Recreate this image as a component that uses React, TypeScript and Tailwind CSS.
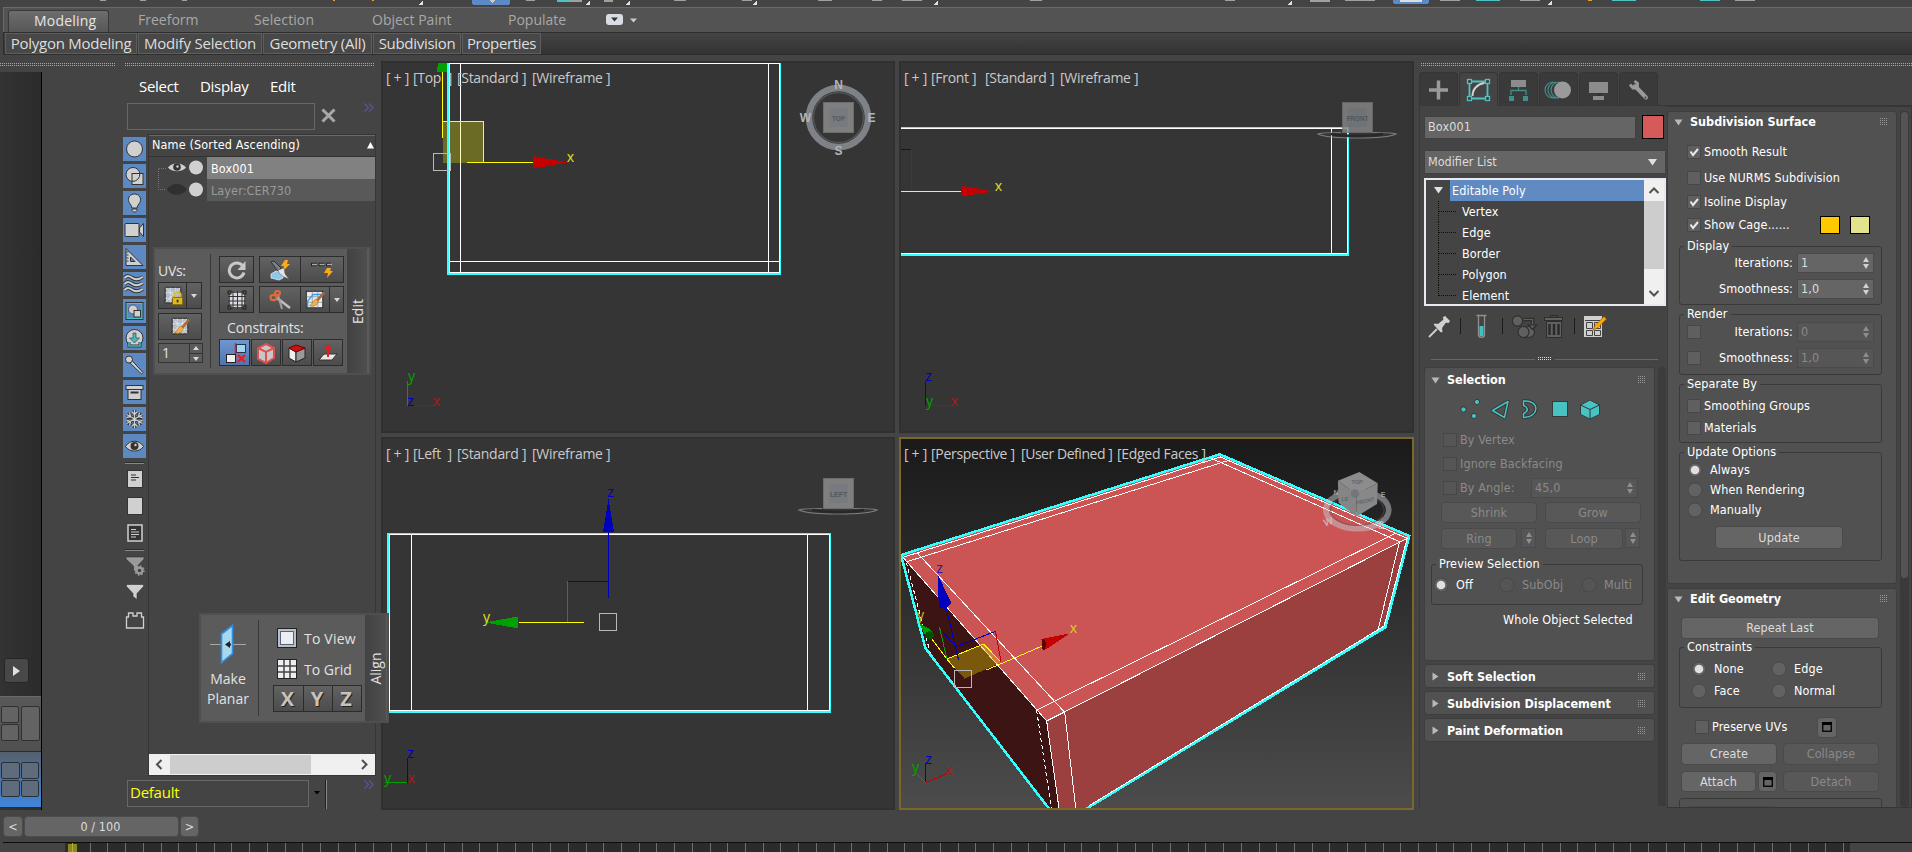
import React from "react";

const uiBase = "font-['DejaVu_Sans',sans-serif] font-stretch-condensed text-[12.5px] leading-4 whitespace-pre";
const ui = uiBase + " tracking-[0.1px]";
const seg = "font-['Open_Sans','Noto_Sans',sans-serif] whitespace-pre";

function Dots({ className = "" }: { className?: string }) {
  return (
    <div className={"flex flex-col gap-px " + className}>
      <div className="h-px bg-[repeating-linear-gradient(90deg,#a8a8a8_0_1px,#444_1px_2px)]" />
      <div className="h-px bg-[repeating-linear-gradient(90deg,#a8a8a8_0_1px,#444_1px_2px)]" />
    </div>
  );
}

/* ---------- top bars ---------- */

function TopToolbar() {
  return (
    <svg className="block h-[7px] w-full shrink-0" viewBox="0 0 1912 7" shapeRendering="crispEdges">
      <rect x="472" y="-4" width="38" height="9" rx="3" fill="#5c8ac6" />
      <rect x="1393" y="-4" width="36" height="8" rx="3" fill="#5c8ac6" />
      <rect x="1400" y="0" width="22" height="2" fill="#ddd" />
      <path d="M489 0h6l-3 3z" fill="#ccc" />
      <g fill="#e8a020"><rect x="333" y="0" width="2" height="1" /><rect x="372" y="0" width="2" height="1" /><rect x="1588" y="0" width="4" height="1" /></g>
      <g fill="#a0a0a0">
        <rect x="100" y="0" width="6" height="1" /><rect x="140" y="0" width="6" height="1" /><rect x="182" y="0" width="5" height="1" />
        <rect x="526" y="0" width="9" height="1" /><rect x="570" y="0" width="12" height="2" /><rect x="604" y="0" width="9" height="2" />
        <rect x="674" y="0" width="12" height="1" /><rect x="742" y="0" width="10" height="1" /><rect x="818" y="0" width="14" height="1" />
        <rect x="872" y="0" width="10" height="1" /><rect x="902" y="0" width="20" height="1" /><rect x="1030" y="0" width="12" height="1" />
        <rect x="1225" y="0" width="10" height="1" /><rect x="1310" y="0" width="20" height="2" /><rect x="1345" y="0" width="30" height="1" />
        <rect x="1440" y="0" width="20" height="1" /><rect x="1520" y="0" width="20" height="1" /><rect x="1735" y="0" width="20" height="1" />
      </g>
      <g fill="#4fc3c3"><rect x="557" y="0" width="13" height="2" /><rect x="1476" y="0" width="24" height="1" /><rect x="1612" y="0" width="24" height="1" /><rect x="1700" y="0" width="20" height="1" /></g>
      <g fill="#e0e0e0"><path d="M423 0v5h-5z" /><path d="M590 0v5h-5z" /><path d="M630 0v5h-5z" /><path d="M757 0v5h-5z" /><path d="M938 0v5h-5z" /><path d="M1552 0v5h-5z" /><path d="M1292 0v5h-5z" /></g>
    </svg>
  );
}

function Ribbon() {
  const cats: [string, string][] = [
    ["Polygon Modeling", "w-[132px] tracking-[-0.25px]"],
    ["Modify Selection", "w-[124px] tracking-[-0.2px]"],
    ["Geometry (All)", "w-[109px] tracking-[-0.25px]"],
    ["Subdivision", "w-[88px] tracking-[-0.3px]"],
    ["Properties", "w-[79px] tracking-[-0.35px]"],
  ];
  return (
    <div className={"flex flex-col shrink-0 h-[48px] pl-[3px] text-[14px] " + seg}>
      <div className="flex h-[25px] border-t border-l border-[#6a6a6a] bg-[#535353] pl-1 pt-[2px] text-[#a8a8a8] leading-[20px]">
        <div className="w-[101px] h-[23px] rounded-t-[3px] border border-b-0 border-[#3a3a3a] bg-gradient-to-b from-[#6d6d6d] to-[#565656] pl-[25px] leading-[19px] tracking-[0.2px] text-[#e6e6e6]">Modeling</div>
        <div className="pl-[29px] w-[116px]">Freeform</div>
        <div className="pl-[29px] w-[118px] tracking-[0.1px]">Selection</div>
        <div className="pl-[29px] w-[136px]">Object Paint</div>
        <div className="pl-[29px] w-[127px]">Populate</div>
        <div className="mt-1 h-[11px] w-[17px] rounded-[3px] bg-[#d8dce4] flex items-center justify-center">
          <svg width="7" height="5"><path d="M0 .5h7l-3.500 4z" fill="#333" /></svg>
        </div>
        <svg className="mt-[8px] ml-[7px]" width="7" height="5"><path d="M0 .5h7l-3.500 4z" fill="#ccc" /></svg>
      </div>
      <div className="flex h-[23px] gap-px border border-[#2e2e2e] border-r-0 bg-gradient-to-b from-[#444] to-[#333] pl-px">
        {cats.map(([t, w]) => (
          <div key={t} className={"flex h-[21px] justify-center border border-[#5e5e5e] bg-[#484848] text-[15px] leading-[19px] text-[#dedede] " + w}>{t}</div>
        ))}
      </div>
    </div>
  );
}

/* ---------- scene explorer ---------- */

const L = "#d0d0d0";
const D = "#333";
const explorerIcons: React.ReactNode[] = [
  <circle cx="12" cy="12" r="8" fill={L} stroke={D} />,
  <g stroke={D} fill={L}><circle cx="10.500" cy="10.500" r="7" /><rect x="9.500" y="9.500" width="11" height="11" /><path d="M9.500 17.300A7 7 0 0 0 17.300 9.500" fill="none" /></g>,
  <g stroke={D} fill={L}><path d="M12 3c-4 0-6.500 3-6 6.500.4 3 3 4 3.500 7.500h5c.5-3.500 3.100-4.500 3.500-7.500C18.500 6 16 3 12 3z" /><path d="M9.500 18h5v1.500l-1.500 1.500h-2l-1.500-1.500z" /></g>,
  <g stroke={D} fill={L}><rect x="2.500" y="5.500" width="14" height="13" rx="1" /><path d="M17 10l4-4.500v13L17 14z" /></g>,
  <g stroke={D} fill={L}><path d="M3.500 3.500v17h17zM8 12v4.500h4.500z" fillRule="evenodd" /><path d="M4 7h2M4 10h2M4 13h2M4 16h2" /></g>,
  <g fill="none"><path d="M2 6c3-3 5-2 8 0s6 2 10-1M2 12c3-3 5-2 8 0s6 2 10-1M2 18c3-3 5-2 8 0s6 2 10-1" stroke={D} strokeWidth="4" /><path d="M2 6c3-3 5-2 8 0s6 2 10-1M2 12c3-3 5-2 8 0s6 2 10-1M2 18c3-3 5-2 8 0s6 2 10-1" stroke={L} strokeWidth="2" /></g>,
  <g><rect x="3" y="3" width="18" height="18" fill={D} /><rect x="4.500" y="4.500" width="15" height="15" fill="#5c89c2" stroke="#4cc4c4" /><circle cx="10.500" cy="10.500" r="4.500" fill={L} stroke={D} strokeWidth=".7" /><rect x="11.500" y="11.500" width="6.500" height="6.500" fill={L} stroke={D} /></g>,
  <g><circle cx="12" cy="12" r="8.500" fill={L} stroke={D} /><path d="M10.500 7h3v5h3.500l-5 5-5-5h3.500z" fill="#45b8b8" stroke={D} strokeWidth=".6" /><path d="M6.500 16v4h11v-4" fill="none" stroke={D} strokeWidth="3" /><path d="M6.500 16v4h11v-4" fill="none" stroke="#45b8b8" strokeWidth="1.600" /></g>,
  <g stroke={D} fill={L}><path d="M8 6l12.500 13.500L19 21 6 8.500z" /><circle cx="6.500" cy="6.500" r="3.500" /></g>,
  <g stroke={D} fill={L}><rect x="5.500" y="8.500" width="13" height="11" /><rect x="3.500" y="5.500" width="17" height="4" /><path d="M8 12.500h8" strokeWidth="2" /></g>,
  <g fill="none"><path d="M12 3v18M4 7.500l16 9M4 16.500l16-9M9 4.500l3 3 3-3M9 19.500l3-3 3 3M4 10.500l4-1-1-4M20 10.500l-4-1 1-4M4 13.500l4 1-1 4M20 13.500l-4 1 1 4" stroke={D} strokeWidth="3" /><path d="M12 3v18M4 7.500l16 9M4 16.500l16-9M9 4.500l3 3 3-3M9 19.500l3-3 3 3M4 10.500l4-1-1-4M20 10.500l-4-1 1-4M4 13.500l4 1-1 4M20 13.500l-4 1 1 4" stroke={L} strokeWidth="1.300" /></g>,
  <g><path d="M3 12.500c4-7 14-7 18 0-4 6-14 6-18 0z" fill={L} stroke={D} /><circle cx="12" cy="12" r="4" fill={D} /><circle cx="13" cy="11" r="1.200" fill={L} /></g>,
];

function IconStrip() {
  return (
    <div className="w-[26px] shrink-0 pl-px pt-[3px]">
      <div className="flex flex-col gap-[3px]">
        {explorerIcons.map((g, i) => (
          <div key={i} className="h-6 w-[23px] bg-[#5c89c2]">
            <svg width="23" height="24" viewBox="0.500 0 23 24">{g}</svg>
          </div>
        ))}
      </div>
      <svg width="23" height="176" viewBox="123 458 23 176" className="block">
        <path d="M125 463.500h19M125 550.500h19" stroke="#888" />
        <path d="M125 462.500h19M125 549.500h19" stroke="#2e2e2e" />
        <g stroke={D} fill={L}><rect x="127.500" y="470.500" width="15" height="17" /><rect x="127.500" y="497.500" width="15" height="17" /></g>
        <path d="M131 475h5M131 477.500h8M131 480h5" stroke={D} strokeWidth="1.200" />
        <rect x="128" y="525" width="14" height="16" fill={D} stroke={L} strokeWidth="1.500" />
        <path d="M131 529.500h5M131 532h8M131 534.500h8M131 537h5" stroke={L} strokeWidth="1.200" />
        <path d="M126 557h18v2l-6.500 7v8l-4-4v-4l-7.500-7z" fill="#9a9a9a" stroke={D} strokeWidth=".6" />
        <circle cx="139.500" cy="570.500" r="3" fill="#444" stroke="#9a9a9a" strokeWidth="2.400" />
        <circle cx="139.500" cy="570.500" r="4.500" fill="none" stroke="#9a9a9a" strokeWidth="1.500" strokeDasharray="1.500 2" />
        <path d="M126.500 584.500h17v2l-6.500 7v6l-4-3v-3l-6.500-7z" fill={L} stroke={D} strokeWidth=".6" />
        <path d="M126.500 628v-11h2v-4h4.500v3h4v-3h4.500v4h2v11z" fill="#444" stroke={L} strokeWidth="1.300" />
      </svg>
    </div>
  );
}

function ObjRow({ on, name }: { on: boolean; name: string }) {
  return (
    <div className={"flex h-[22px] " + ui}>
      <svg width="58" height="22" viewBox="0 0 58 22" className="shrink-0">
        <path d={on ? "M17 11.500h-7.500V22" : "M9.500 0v10.500h7.500"} fill="none" stroke="#777" strokeDasharray="1 1" />
        {on ? (
          <g><path d="M19 10.500c4-5.500 14-5.500 18 0-4 5-14 5-18 0z" fill={L} /><circle cx="28" cy="10" r="3.800" fill={D} /><circle cx="28.500" cy="9.500" r="1.200" fill={L} /></g>
        ) : (
          <path d="M18 10.500c4-7.500 15-7.500 20 0-5 7-16 7-20 0z" fill="#303030" />
        )}
        <circle cx="47" cy="10.500" r="7" fill={L} />
      </svg>
      <div className={"flex-1 pl-1 leading-[24px] " + (on ? "bg-[#818181] text-white" : "bg-[#595959] text-[#999]")}>{name}</div>
    </div>
  );
}

function Chevrons() {
  return <svg width="10" height="9" className="block"><path d="M.5.5l4 4-4 4M5 .5l4 4-4 4" fill="none" stroke="#565696" strokeWidth="1.300" /></svg>;
}

function Explorer() {
  return (
    <div className="flex w-[259px] flex-col">
      <div className={"flex h-[31px] pl-[17px] pt-[4px] text-[15px] leading-5 tracking-[-0.3px] text-white " + seg}>
        <span className="w-[61px]">Select</span>
        <span className="w-[70px]">Display</span>
        <span>Edit</span>
      </div>
      <div className="flex h-[31px] pl-[5px]">
        <div className="h-[27px] w-[188px] border border-[#686868]" />
        <svg className="ml-[6px] mt-[5px]" width="15" height="15"><path d="M1.500 1.500l12 12M13.500 1.500l-12 12" stroke="#a8a8a8" strokeWidth="3" /></svg>
        <div className="ml-[28px]"><Chevrons /></div>
      </div>
      <div className="flex h-[642px]">
        <IconStrip />
        <div className="flex w-[228px] flex-col border border-[#363636]">
          <div className={"flex h-[22px] shrink-0 items-center justify-between border-y border-[#686868] border-b-[#333] pb-[2px] pl-[3px] pr-px text-white " + ui}>
            <span className="tracking-[0.15px]">Name (Sorted Ascending)</span>
            <svg width="7" height="7"><path d="M3.500 0l3.500 6.500H0z" fill="#fff" /></svg>
          </div>
          <ObjRow on name="Box001" />
          <ObjRow on={false} name="Layer:CER730" />
          <div className="flex-1" />
          <div className="flex h-[21px] items-center bg-[#f0f0f0]">
            <svg width="21" height="21"><path d="M12.500 6l-4.500 4.500 4.500 4.500" fill="none" stroke="#505050" strokeWidth="2" /></svg>
            <div className="h-[19px] w-[141px] bg-[#cdcdcd]" />
            <div className="flex-1" />
            <svg width="21" height="21"><path d="M8 6l4.500 4.500L8 15" fill="none" stroke="#505050" strokeWidth="2" /></svg>
          </div>
        </div>
      </div>
      <div className="flex h-8 pl-[5px] pt-[4px]">
        <div className={"h-[27px] w-[182px] border border-[#686868] pl-[2px] text-[15px] leading-[23px] tracking-[-0.25px] text-[#ffff00] " + seg}>Default</div>
        <svg className="ml-[5px] mt-[11px]" width="6" height="4"><path d="M0 0h6L3 3.500z" fill="#000" /></svg>
        <div className="ml-[5px] h-[29px] w-[2px] border-l border-[#222] bg-[#888]" />
        <div className="ml-[37px]"><Chevrons /></div>
      </div>
    </div>
  );
}

function LeftStrip() {
  return (
    <div className="flex h-[738px] w-[42px] flex-col border-r border-black bg-gradient-to-r from-[#333] to-[#2b2b2b]">
      <div className="flex h-[624px] items-end pb-[13px] pl-1">
        <div className="flex h-[25px] w-[25px] items-center justify-center rounded-[3px] border border-[#262626] bg-[#484848]">
          <svg width="7" height="10"><path d="M0 0l7 5-7 5z" fill="#e0e0e0" /></svg>
        </div>
      </div>
      <div className="flex h-[55px] gap-[2px] border-t border-[#6a6a6a] bg-gradient-to-b from-[#585858] to-[#505050] pl-px pt-[9px]">
        <div className="flex w-[18px] flex-col gap-[1px]">
          <div className="h-[17px] rounded-[2px] border border-[#303030] bg-[#636363]" />
          <div className="h-[17px] rounded-[2px] border border-[#303030] bg-[#636363]" />
        </div>
        <div className="h-[35px] w-[19px] rounded-[2px] border border-[#303030] bg-[#636363]" />
      </div>
      <div className="grid h-[57px] grid-cols-[19px_18px] grid-rows-[17px_17px] gap-px border-y border-[#2a2a2a] bg-gradient-to-b from-[#54606e] to-[#3f85dc] pl-px pt-[10px]">
        {[0, 1, 2, 3].map((i) => (
          <div key={i} className="rounded-[2px] border border-[#26303c] bg-[#5f6c7c]" />
        ))}
      </div>
    </div>
  );
}

/* ---------- floating ribbon panels ---------- */

const tb = "flex items-center justify-center border border-[#2c2c2c] bg-gradient-to-b from-[#626262] to-[#4c4c4c]";

function Tri({ up, c = "#d8d8d8" }: { up?: boolean; c?: string }) {
  return <svg width="6" height="4" className="block"><path d={up ? "M3 0l3 4H0z" : "M0 0h6L3 4z"} fill={c} /></svg>;
}

function Brush() {
  return <g><path d="M21 3l-8 9 2 2 8-9z" fill="#b8642a" /><path d="M13 11c-3 1-3 5-7 7 4 2 9 0 9.500-5z" fill="#f0b050" stroke="#a06820" strokeWidth=".6" /></g>;
}

function GridSvg() {
  return <g><rect x="3.500" y="2.500" width="17" height="17" fill="#b4bcc6" stroke="#222" /><path d="M9 3v16M15 3v16M4 8.500h16M4 14.500h16M4 3l16 16M20 3L4 19" stroke="#e8ecf0" strokeDasharray="2 1" /></g>;
}

function EditPanel() {
  return (
    <div className={"absolute left-[153px] top-[247px] flex h-[128px] w-[218px] border-2 border-[#4f4f4f] bg-[#5b5b5b] text-[#e2e2e2] " + seg}>
      <div className="flex w-[55px] flex-col pl-[3px] pt-[12px]">
        <div className="h-[21px] text-[14px] leading-5 tracking-[-0.3px]">UVs:</div>
        <div className="flex">
          <div className={tb + " h-[27px] w-[29px]"}>
            <svg width="22" height="22" viewBox="0 0 24 24"><GridSvg /><path d="M13.500 14v-3c0-4 7-4 7 0v3" fill="none" stroke="#d8b830" strokeWidth="2" /><rect x="11.500" y="13.500" width="11" height="8" rx="1" fill="#e0b820" stroke="#7a6000" /><rect x="16" y="16" width="2" height="3" fill="#333" /></svg>
          </div>
          <div className={tb + " h-[27px] w-[15px] border-l-0"}><Tri /></div>
        </div>
        <div className={tb + " mt-1 h-[27px] w-[44px]"}><svg width="22" height="22" viewBox="0 0 24 24"><GridSvg /><Brush /></svg></div>
        <div className="mt-[3px] flex h-[20px] w-[45px] border border-[#333]">
          <div className="w-[30px] pl-[3px] text-[14px] leading-[18px]">1</div>
          <div className="flex flex-1 flex-col items-center justify-around border-l border-[#333]"><Tri up /><div className="h-px w-full bg-[#333]" /><Tri /></div>
        </div>
      </div>
      <div className="mt-[5px] h-[114px] w-px bg-[#383838]" />
      <div className="flex w-[136px] flex-col pl-[8px] pt-[7px]">
        <div className="flex">
          <div className={tb + " h-[27px] w-[35px]"}>
            <svg width="20" height="20"><path d="M15.500 5.500a7.500 7.500 0 1 0 1.500 7" fill="none" stroke="#c8c8c4" strokeWidth="3" /><path d="M18.500 1v9h-8z" fill="#c8c8c4" /></svg>
          </div>
          <div className={tb + " ml-[5px] h-[27px] w-[42px]"}>
            <svg width="22" height="22"><path d="M2 3l3-1 7 7-3 3z" fill="#7a8088" stroke="#222" strokeWidth=".8" /><path d="M2 15l5-3 7 2v5l-4 2-8-2z" fill="#8cc8ea" stroke="#dfe8ee" strokeWidth=".8" /><path d="M16 1l3 0-1 4 3 0-8 8 2-6h-3z" fill="#ffa818" /><path d="M9 11l6-2 1 6 4 5-5-2-5-4z" fill="#e4e4e4" stroke="#555" strokeWidth=".5" /></svg>
          </div>
          <div className={tb + " h-[27px] w-[43px] border-l-0"}>
            <svg width="26" height="20"><path d="M2 4.500h20" stroke="#222" strokeWidth="3.500" strokeDasharray="6 1.500" /><path d="M3 4.500h20" stroke="#aaa" strokeWidth="1.500" strokeDasharray="5 2.500" /><path d="M18 8h4l-1 3h3l-6 7 1-5h-4z" fill="#ffa818" /></svg>
          </div>
        </div>
        <div className="mt-[3px] flex">
          <div className={tb + " h-[27px] w-[35px]"}>
            <svg width="20" height="20"><rect x="3" y="3" width="14" height="14" fill="#d8dce2" /><path d="M1 6.500h18M1 11h18M1 15h18M6 1v18M10.500 1v18M15 1v18" stroke="#333" /><g fill="#555" stroke="#222"><rect x="1" y="1" width="3" height="3" /><rect x="16" y="1" width="3" height="3" /><rect x="1" y="16" width="3" height="3" /><rect x="16" y="16" width="3" height="3" /></g></svg>
          </div>
          <div className={tb + " ml-[5px] h-[27px] w-[42px]"}>
            <svg width="22" height="20"><path d="M8 8l13 10" stroke="#c0c0c0" strokeWidth="2.500" /><path d="M9 5l4 14" stroke="#a0a0a0" strokeWidth="2" /><g fill="none" stroke="#e06a38" strokeWidth="2.200"><ellipse cx="4.500" cy="7.500" rx="3" ry="2.600" /><ellipse cx="8.500" cy="3" rx="2.500" ry="2" /></g></svg>
          </div>
          <div className={tb + " h-[27px] w-[29px] border-l-0"}><svg width="22" height="22" viewBox="0 0 24 24"><rect x="2.500" y="2.500" width="18" height="18" fill="#e8ecf2" stroke="#222" /><path d="M9 3v17M15 3v17M3 8.500h17M3 14.500h17" stroke="#999" /><path d="M4 20V13L10 6h10" fill="none" stroke="#3a98e8" strokeWidth="1.500" /><Brush /></svg></div>
          <div className={tb + " h-[27px] w-[14px] border-l-0"}><Tri /></div>
        </div>
        <div className="h-[26px] pl-2 pt-[5px] text-[14px] leading-5 tracking-[-0.15px]">Constraints:</div>
        <div className="flex">
          <div className="flex h-[27px] w-[31px] items-center justify-center border border-[#2c2c2c] bg-gradient-to-b from-[#6f97d0] to-[#4f75b0]">
            <svg width="24" height="22"><rect x="13.500" y="2.500" width="9" height="8" fill="#9fd4f4" stroke="#234" /><path d="M12.500 1v20" stroke="#f01818" strokeWidth="1.500" /><rect x="3.500" y="12.500" width="9" height="8" fill="#eee" stroke="#222" /><path d="M15 13l7 7M22 13l-7 7" stroke="#e02020" strokeWidth="2" /></svg>
          </div>
          <div className={tb + " ml-px h-[27px] w-[30px]"}><svg width="22" height="22"><path d="M11 2l8 4v10l-8 5-8-4V6z" fill="#c8c8c8" stroke="#e05050" strokeWidth="2" /><path d="M3 6l8 4 8-4M11 10v11" fill="none" stroke="#e05050" strokeWidth="2" /></svg></div>
          <div className={tb + " ml-px h-[27px] w-[30px]"}><svg width="22" height="22"><path d="M3 6v10l7 4V10z" fill="#eee" stroke="#222" /><path d="M10 10l9-4v10l-9 4z" fill="#999" stroke="#222" /><path d="M3 6l7-3 9 3-9 4z" fill="#d01010" stroke="#700" /></svg></div>
          <div className={tb + " ml-px h-[27px] w-[30px]"}><svg width="22" height="22"><path d="M2 18l5-6h13l-5 6z" fill="#e8e8e8" stroke="#333" /><path d="M11 15V3" stroke="#f01818" strokeWidth="2" /><path d="M7.500 7L11 2l3.500 5z" fill="#f01818" /></svg></div>
        </div>
      </div>
      <div className="flex w-[20px] items-center justify-center bg-gradient-to-r from-[#424242] to-[#4e4e4e]">
        <span className="-rotate-90 text-[14px]">Edit</span>
      </div>
    </div>
  );
}

function AlignPanel() {
  return (
    <div className={"absolute left-[199px] top-[613px] flex h-[110px] w-[190px] border-2 border-[#4f4f4f] bg-[#5b5b5b] text-[14px] text-[#e2e2e2] " + seg}>
      <div className="flex w-[57px] flex-col items-center pr-[3px] pt-[9px] leading-5">
        <svg width="38" height="42"><path d="M1 20.500h36" stroke="#a8a8a8" /><path d="M12.500 10l11-8.500v28l-11 9z" fill="#a8d8ee" stroke="#2f8fe8" strokeWidth="1.600" /><path d="M22 20.500h-4" stroke="#222" strokeWidth="2" /><path d="M16 20.500l5-3.500v7z" fill="#222" /></svg>
        <span className="mt-[3px]">Make</span>
        <span>Planar</span>
      </div>
      <div className="mt-[5px] h-[96px] w-px bg-[#383838]" />
      <div className="flex w-[106px] flex-col pl-[14px] pt-[11px]">
        <div className="flex h-[31px] pl-[4px]">
          <svg width="20" height="20" className="mt-[2px]"><rect x=".5" y=".5" width="19" height="19" fill="#b8c0cc" stroke="#222" /><rect x="3.500" y="3.500" width="13" height="13" fill="#eceef2" stroke="#5a6478" /></svg>
          <span className="ml-[7px] leading-[25px] tracking-[0.2px]">To View</span>
        </div>
        <div className="flex h-[28px] pl-[4px]">
          <svg width="20" height="20" className="mt-[2px]"><rect x=".5" y=".5" width="19" height="19" fill="#eceef2" stroke="#222" /><path d="M7 1v18M13 1v18M1 7h18M1 13h18" stroke="#444" strokeWidth="1.500" /></svg>
          <span className="ml-[7px] leading-[25px]">To Grid</span>
        </div>
        <div className="flex font-bold text-[20px] leading-6 text-[#c8c2b8]">
          {["X", "Y", "Z"].map((c, i) => (
            <div key={c} className={tb + " h-[27px] pr-[2px] [text-shadow:1px_1px_0_#222]" + (i ? " w-[29px] border-l-0" : " w-[31px]")}>{c}</div>
          ))}
        </div>
      </div>
      <div className="flex w-[21px] items-center justify-center bg-gradient-to-r from-[#424242] to-[#4e4e4e]">
        <span className="-rotate-90">Align</span>
      </div>
    </div>
  );
}

/* ---------- viewports ---------- */

function VLabel({ parts, pad = "left-[3px]" }: { parts: [string, string][]; pad?: string }) {
  return (
    <div className={"absolute top-[5px] flex text-[14px] leading-5 tracking-[-0.3px] text-[#cacaca] " + pad + " " + seg}>
      {parts.map(([t, w], i) => <span key={i} className={w}>{t}</span>)}
    </div>
  );
}

const axisFont = "font-['Noto_Sans',sans-serif] text-[14px]";

function Ax({ x, y, c, children }: { x: number; y: number; c: string; children: string }) {
  return <text x={x} y={y} fill={c} textAnchor="middle" className={axisFont}>{children}</text>;
}

function FaceCube({ x, y, label }: { x: number; y: number; label: string }) {
  return (
    <g opacity=".95">
      <rect x={x + 0.5} y={y + 0.5} width="30" height="30" fill="#848484" stroke="#707070" />
      <rect x={x + 6} y={y + 6} width="19" height="19" fill="#7b7e82" />
      <text x={x + 15.500} y={y + 18.500} textAnchor="middle" fill="#575b61" className="font-['Liberation_Sans',sans-serif] text-[8px] font-bold" textLength={label.length * 4.300} lengthAdjust="spacingAndGlyphs">{label}</text>
    </g>
  );
}

function FlatRing({ cx, cy }: { cx: number; cy: number }) {
  return (
    <g fill="none">
      <path d={`M${cx - 16} ${cy - 1.500}c-10 0-20 .5-23 1.500 6 3 21 4 39 4s33-1 39-4c-3-1-13-1.500-23-1.500`} stroke="#8e9297" strokeOpacity=".8" strokeWidth="1.200" />
      <path d={`M${cx - 26} ${cy}c14 2.500 38 2.500 52 0`} stroke="#26282a" strokeWidth="2.500" />
    </g>
  );
}

const YEL = "#ffff00", RED = "#c40000", BLU = "#0000c0", GRN = "#00a000", CY = "#33ffff";

const vp = "relative overflow-hidden border-2 border-[#303030] bg-[#353535]";

function TopView() {
  return (
    <div className={vp + " h-[372px] w-[514px]"}>
      <svg className="block" width="510" height="368" viewBox="383 63 510 368" shapeRendering="crispEdges">
        <path d="M447 63h2v212h-2zM447 273h334v2h-334zM780 63h1v212h-1z" fill={CY} />
        <g fill="#fff"><path d="M449 63h1v210h-1zM779 63h1v210h-1zM460 63h1v210h-1zM768 63h1v210h-1zM449 63h331v1h-331zM449 261h331v1h-331zM449 272h331v1h-331z" /></g>
        <rect x="443" y="121" width="40" height="42" fill="#ffff00" opacity=".27" />
        <path d="M442 63h1v75h-1zM442 121h42v1h-42zM483 121h1v42h-1zM467 162h66v1h-66z" fill={YEL} />
        <path d="M438 63h10v9h-11z" fill={GRN} />
        <path d="M447 63h2v100h-2z" fill={CY} />
        <path d="M533 156l35 6.500-35 6z" fill={RED} />
        <rect x="433.500" y="153.500" width="17" height="17" fill="none" stroke="#b8b8b8" />
        <Ax x={570.500} y={162} c="#dcdc20">x</Ax>
        <path d="M407 381h1v25h-1z" fill={GRN} /><path d="M413 405h21v1h-21z" fill={RED} />
        <Ax x={411.500} y={381} c={GRN}>y</Ax><Ax x={436.500} y={406} c="#b01818">x</Ax><Ax x={410.500} y={406} c={BLU}>z</Ax>
        <g shapeRendering="auto">
          <circle cx="838.500" cy="117.500" r="29.500" fill="none" stroke="#7e8287" strokeWidth="6.500" />
          <circle cx="838.500" cy="117.500" r="25" fill="none" stroke="#515357" strokeWidth="1.500" />
          <FaceCube x={823} y={102} label="TOP" />
          <g fill="#b4b4b4" textAnchor="middle" className="font-['Liberation_Sans',sans-serif] text-[12px] font-bold">
            <text x="838.500" y="89">N</text><text x="838.500" y="155">S</text><text x="805.500" y="122">W</text><text x="871.500" y="122">E</text>
          </g>
        </g>
      </svg>
      <VLabel parts={[["[ + ]", "w-[27px]"], ["[Top  ]", "w-[44px]"], ["[Standard ]", "w-[75px]"], ["[Wireframe ]", ""]]} />
    </div>
  );
}

function FrontView() {
  return (
    <div className={vp + " h-[372px] w-[515px]"}>
      <svg className="block" width="511" height="368" viewBox="901 63 511 368" shapeRendering="crispEdges">
        <path d="M901 127h448v1H901zM1348 127h1v129h-1zM901 254h448v2H901z" fill={CY} />
        <path d="M901 128h447v1H901zM1347 128h1v126h-1zM1331 128h1v126h-1zM901 253h447v1H901z" fill="#fff" />
        <path d="M901 149h10v1h-10z" fill={BLU} /><path d="M911 150h1v41h-1z" fill={RED} />
        <path d="M901 191h60v1h-60z" fill={YEL} /><path d="M961 185.500l32 6-32 5z" fill={RED} />
        <Ax x={998.500} y={191} c="#dcdc20">x</Ax>
        <path d="M925 381h1v25h-1z" fill={BLU} /><path d="M931 405h22v1h-22z" fill={RED} />
        <Ax x={928.500} y={381} c={BLU}>z</Ax><Ax x={954.500} y={406} c="#b01818">x</Ax><Ax x={929.500} y={406} c={GRN}>y</Ax>
        <g shapeRendering="auto"><FlatRing cx={1357} cy={134} /><g opacity=".9"><FaceCube x={1342} y={102} label="FRONT" /></g></g>
      </svg>
      <VLabel parts={[["[ + ]", "w-[27px]"], ["[Front ]", "w-[54px]"], ["[Standard ]", "w-[75px]"], ["[Wireframe ]", ""]]} />
    </div>
  );
}

function LeftView() {
  return (
    <div className={vp + " h-[373px] w-[514px]"}>
      <svg className="block" width="510" height="369" viewBox="383 439 510 369" shapeRendering="crispEdges">
        <path d="M387 533h444v1H387zM387 533h2v180h-2zM387 711h444v2H387zM830 533h1v180h-1z" fill={CY} />
        <path d="M389 534h441v1H389zM389 534h1v177h-1zM411 534h1v177h-1zM807 534h1v177h-1zM829 534h1v177h-1zM389 710h441v1H389z" fill="#fff" />
        <path d="M608 532h1v66h-1zM568 581h41v1h-41z" fill={BLU} /><path d="M608.500 499l5.500 33h-11z" fill={BLU} />
        <path d="M567 581h1v41h-1z" fill={GRN} /><path d="M519 622h65v1h-65z" fill={YEL} /><path d="M485 622.500l33-6v12z" fill={GRN} />
        <rect x="599.500" y="613.500" width="17" height="17" fill="none" stroke="#b8b8b8" />
        <Ax x={610.500} y={497} c={BLU}>z</Ax><Ax x={486.500} y={622} c="#dcdc20">y</Ax>
        <path d="M407 758h1v25h-1z" fill={BLU} /><path d="M385 782h22v1h-22z" fill={GRN} />
        <Ax x={410.500} y={758} c={BLU}>z</Ax><Ax x={411.500} y={783} c="#b01818">x</Ax><Ax x={387.500} y={783} c={GRN}>y</Ax>
        <g shapeRendering="auto"><FlatRing cx={838} cy={510} /><FaceCube x={823} y={478} label="LEFT" /></g>
      </svg>
      <VLabel parts={[["[ + ]", "w-[27px]"], ["[Left  ]", "w-[44px]"], ["[Standard ]", "w-[75px]"], ["[Wireframe ]", ""]]} />
    </div>
  );
}

function PerspView() {
  return (
    <div className="relative h-[373px] w-[515px] overflow-hidden border-2 border-[#7b6729] bg-gradient-to-b from-[#1a1a1a] to-[#4c4c4c]">
      <svg className="block" width="511" height="369" viewBox="901 439 511 369">
        <g transform="translate(895 430) scale(.33476 .33333)" shapeRendering="crispEdges" fill="none" strokeWidth="1">
          <path d="M18 378L970 76 1536 320 453 873z" fill="#cb5555" />
          <path d="M453 873L1536 320 1465 592 575 1136H490z" fill="#9c3f3f" />
          <path d="M18 378L453 873 490 1136H460L91 655z" fill="#3d1414" />
          <path d="M460 1136L91 655 18 375 970 73 1536 318 1465 592 572 1136" stroke={CY} strokeWidth="2.500" vectorEffect="non-scaling-stroke" />
          <g stroke="#fff">
            <path vectorEffect="non-scaling-stroke" d="M24 382L972 81 1530 325M24 382L453 873 1530 325M65 367L507 847 540 1136M453 873L490 1136M423 840L1497 309M945 85L1507 335 1443 600M1530 325L1461 588 580 1127M36 395L997 91" />
            <path vectorEffect="non-scaling-stroke" strokeDasharray="4 3" d="M34 398L105 668M423 840L467 1136" />
          </g>
          <path d="M155 687L265 642 317 697 208 746z" fill="#d8c000" opacity=".4" />
          <g stroke={YEL}><path vectorEffect="non-scaling-stroke" d="M105 620L155 687 265 642 317 697M155 687L178 715M273 720L440 648" /></g>
          <g stroke={BLU}><path vectorEffect="non-scaling-stroke" d="M152 530L190 690M133 595L183 650 300 604" /></g>
          <path vectorEffect="non-scaling-stroke" stroke={RED} d="M300 604L317 697" />
          <path vectorEffect="non-scaling-stroke" stroke={GRN} d="M133 592L155 687" />
          <path d="M127 432L169 520 152 537 131 532z" fill={BLU} />
          <path d="M73 580L105 598 115 612 95 625z" fill={GRN} /><ellipse cx="103" cy="616" rx="13" ry="13" fill="#005000" />
          <path d="M437 627L522 610 450 659z" fill={RED} /><ellipse cx="444" cy="644" rx="6" ry="16" fill="#600000" />
          <rect x="177" y="721" width="52" height="51" stroke="#b8b8b8" vectorEffect="non-scaling-stroke" />
          <path vectorEffect="non-scaling-stroke" stroke={BLU} d="M92 998V1058" />
          <path vectorEffect="non-scaling-stroke" stroke={GRN} d="M92 1058L58 1025" />
          <path vectorEffect="non-scaling-stroke" stroke={RED} d="M92 1058L158 1030" />
          <g shapeRendering="auto">
            <ellipse cx="1381" cy="240" rx="94" ry="56" stroke="#c6cad0" strokeOpacity=".5" strokeWidth="17" />
            <ellipse cx="1381" cy="240" rx="80" ry="46" stroke="#555" strokeOpacity=".5" strokeWidth="4" />
            <path d="M1387 126L1442 160 1378 192 1323 152z" fill="#8c8c8c" /><path d="M1323 152L1378 192V260L1325 218z" fill="#858585" /><path d="M1442 160L1378 192V260L1440 222z" fill="#888" />
            <ellipse cx="1374" cy="191" rx="12" ry="13" fill="#73767a" />
          </g>
        </g>
        <g fill="#63666b" textAnchor="middle" className="font-['Liberation_Sans',sans-serif] text-[5.500px] font-bold">
          <text x="1357" y="484">TOP</text><text x="1365" y="503" transform="rotate(-12 1365 501)">FRONT</text><text x="1345" y="501">LE</text>
        </g>
        <g fill="#d0c0c0" fillOpacity=".8" textAnchor="middle" className="font-['Liberation_Sans',sans-serif] text-[10px] font-bold"><text x="1328" y="525" transform="rotate(-20 1328 521)">W</text><text x="1381" y="529">S</text></g>
        <g fill="#b0b0b0" fillOpacity=".8" textAnchor="middle" className="font-['Liberation_Sans',sans-serif] text-[7px] font-bold"><text x="1336" y="495">N</text><text x="1383" y="497">E</text></g>
        <Ax x={939.500} y={573} c="#2020b0">z</Ax><Ax x={920.500} y={620} c="#b8b830">y</Ax><Ax x={1073.500} y={633} c="#dcc820">x</Ax>
        <Ax x={928.500} y={764} c={BLU}>z</Ax><Ax x={915.500} y={772} c={GRN}>y</Ax><Ax x={949.500} y={775} c="#b01818">x</Ax>
      </svg>
      <VLabel parts={[["[ + ]", "w-[27px]"], ["[Perspective ]", "w-[90px]"], ["[User Defined ]", "w-[96px] tracking-[-0.45px]"], ["[Edged Faces ]", ""]]} />
    </div>
  );
}

/* ---------- command panel ---------- */

function CmdTabs() {
  const icons = [
    <path key="a" d="M19.500 9.500v19M10 19h19" stroke="#9a9a9a" strokeWidth="3.500" />,
    <g key="b" fill="none" stroke="#4cc4c4" strokeWidth="1.800"><path d="M10.500 10.500h18v17h-18z" /><g fill="#3a3a3a" strokeWidth="1.300"><rect x="8.500" y="8.500" width="4" height="4" /><rect x="26.500" y="8.500" width="4" height="4" /><rect x="8.500" y="25.500" width="4" height="4" /><rect x="26.500" y="25.500" width="4" height="4" /></g><path d="M13.500 25c0-7 5-12 12-13" stroke={L} strokeWidth="2" /></g>,
    <g key="c"><rect x="12" y="9" width="15" height="7" fill="#8c8c8c" /><path d="M19.500 16v4M12 24v-4.500h15V24" fill="none" stroke="#3f8f8c" strokeWidth="1.300" /><rect x="10" y="25" width="5" height="5" fill="#3f8f8c" /><rect x="24" y="25" width="5" height="5" fill="#3f8f8c" /></g>,
    <g key="d"><g fill="none" stroke="#3f8f8c" strokeWidth="1.200"><path d="M17 11a8 8 0 0 0 0 16M14 11a8 8 0 0 0 0 16M20 11a8 8 0 0 0 0 16" /></g><circle cx="23.500" cy="19" r="8.500" fill="#9a9a9a" /></g>,
    <g key="e" fill="#8c8c8c"><rect x="10" y="11" width="19" height="11" /><rect x="18" y="22" width="4" height="3" fill="#333" /><rect x="14" y="25" width="11" height="4" /></g>,
    <g key="f"><path d="M16 15l11 11.500" stroke="#9a9a9a" strokeWidth="4" strokeLinecap="round" /><path d="M11 13.500l3 3.500h3.500l1-1.500v-3L15.500 10" fill="none" stroke="#9a9a9a" strokeWidth="2.800" /><circle cx="26.500" cy="26.500" r="1" fill="#444" /></g>,
  ];
  return (
    <div className="flex h-[34px] gap-px border-b border-[#363636]">
      {icons.map((g, i) => (
        <div key={i} className={"h-[34px] w-[39px] rounded-t-[4px] border border-b-0 border-[#363636] " + (i === 1 ? "bg-[#444]" : "bg-[#3a3a3a]")}>
          <svg width="37" height="33" viewBox="1 2 37 33">{g}</svg>
        </div>
      ))}
    </div>
  );
}

function Grip() {
  return (
    <svg width="8" height="8" shapeRendering="crispEdges" className="block">
      {[0, 2, 4, 6].map((y) => <path key={y} d={`M0 ${y + 0.5}h8`} stroke="#969696" strokeDasharray="1 1" />)}
    </svg>
  );
}

function RollHead({ t, open, h = "h-[23px]" }: { t: string; open?: boolean; h?: string }) {
  return (
    <div className={"flex items-center pl-[6px] pr-2 " + h}>
      <svg width="9" height="9"><path d={open ? "M.5 1.500h8l-4 6z" : "M1.500 .5l6 4-6 4z"} fill="#b8b8b8" /></svg>
      <span className={"ml-[7px] flex-1 font-bold text-white " + uiBase}>{t}</span>
      <Grip />
    </div>
  );
}

function Chk({ on, t, off, className = "" }: { on?: boolean; t?: string; off?: boolean; className?: string }) {
  return (
    <div className={"flex items-center " + className}>
      <svg width="14" height="14" className="shrink-0">
        <rect x=".5" y=".5" width="13" height="13" fill={off ? "#555" : "#5f5f5f"} stroke="#474747" />
        {on && <path d="M3.500 6.500l2.500 3.500 5-6" fill="none" stroke="#e8e8e8" strokeWidth="2" />}
      </svg>
      {t && <span className={"ml-[3px] " + ui + (off ? " text-[#8a8a8a]" : " text-white")}>{t}</span>}
    </div>
  );
}

function Radio({ on, t, off, className = "" }: { on?: boolean; t: string; off?: boolean; className?: string }) {
  return (
    <div className={"flex items-center " + className}>
      <svg width="16" height="16" className="shrink-0">
        <circle cx="8" cy="8" r="7" fill={off ? "#555" : "#626262"} stroke="#484848" />
        {on && <circle cx="8" cy="8" r="4.300" fill="#e0e0e0" />}
      </svg>
      <span className={"ml-[7px] " + ui + (off ? " text-[#8a8a8a]" : " text-white")}>{t}</span>
    </div>
  );
}

function Btn({ t, off, className = "" }: { t: string; off?: boolean; className?: string }) {
  return <div className={"flex items-center justify-center rounded-[4px] border " + ui + (off ? " border-[#4a4a4a] bg-[#585858] text-[#8a8a8a] " : " border-[#4a4a4a] bg-[#656565] text-[#dcdcdc] ") + className}>{t}</div>;
}

function SpinArrows({ off }: { off?: boolean }) {
  const c = off ? "#8e8e8e" : "#d0d0d0";
  return <svg width="6" height="12" className="block"><path d="M3 0l3 5H0zM0 7h6l-3 5z" fill={c} /></svg>;
}

function Field({ t, off, className = "" }: { t: string; off?: boolean; className?: string }) {
  return (
    <div className={"flex h-5 items-center justify-between border border-[#4a4a4a] pl-[3px] pr-1 " + ui + (off ? " bg-[#565656] text-[#8a8a8a] " : " bg-[#656565] text-[#dcdcdc] ") + className}>
      <span>{t}</span>
      <SpinArrows off={off} />
    </div>
  );
}

function Group({ t, className, children }: { t: string; className: string; children?: React.ReactNode }) {
  return (
    <fieldset className={"rounded-[3px] border border-[#3a3a3a] min-w-0 " + className}>
      {t && <legend className={"ml-[4px] h-4 px-[3px] text-white " + ui}>{t}</legend>}
      {children}
    </fieldset>
  );
}

const roll = "rounded-[3px] border border-[#3e3e3e] bg-[#515151] overflow-hidden";

function StackTools() {
  return (
    <svg width="241" height="50" viewBox="1424 310 241 50" className="block">
      <path d="M1429 337l9-9" stroke={L} strokeWidth="1.800" /><path d="M1434 323l4 .5 5-4-.5-2.500 2.500-1.500 5.500 5.500-2 2.500-2.500-.5-3.500 5 .5 4-2 1-7.500-8z" fill={L} stroke={D} strokeWidth=".7" />
      <path d="M1460.500 318v16M1502.500 318v16M1574.500 318v16" stroke="#1c1c1c" />
      <path d="M1478.500 316v19c0 3 6 3 6 0v-19M1476.500 315.500h10" fill="none" stroke="#909090" strokeWidth="1.300" /><rect x="1479.500" y="326" width="4" height="10" fill="#42c0c0" />
      <g stroke="#2e2e2e" fill="#606060" strokeWidth="1.200"><path d="M1524 319.500h8.500v7" fill="none" stroke="#2e2e2e" strokeWidth="3.500" /><path d="M1524 319.500h8.500v7" fill="none" stroke="#606060" strokeWidth="1.200" /><circle cx="1517.500" cy="321" r="5.200" /><circle cx="1529" cy="332" r="5.500" /><circle cx="1523.500" cy="332" r="5.500" /><path d="M1528.500 325h8l-4 4.500z" /></g>
      <g stroke="#2e2e2e" fill="#606060"><rect x="1546.500" y="321.500" width="15" height="16" /><rect x="1544.500" y="317.500" width="18" height="3" /><path d="M1550.500 317v-1.500h7v1.500" fill="none" /></g><path d="M1549.500 324v11M1554 324v11M1558.500 324v11" stroke="#2a2a2a" strokeWidth="2.500" />
      <rect x="1584" y="316" width="18" height="21" fill={L} /><path d="M1585 320.500h16M1586.500 322.500h6v6h-6zM1594.500 322.500h6v6h-6zM1586.500 330.500h6v5h-6zM1594.500 330.500h6v5h-6z" fill="none" stroke="#444" />
      <path d="M1593 330l2-4.500 9-9 2.500 2.500-9 9z" fill="#ffaa00" stroke="#7a5200" strokeWidth=".6" />
      <path d="M1431 359.500h104M1555 359.500h103" stroke="#686868" />
      <path d="M1538 357.500h13M1538 359.500h13" stroke="#ddd" strokeDasharray="1 1" shapeRendering="crispEdges" />
    </svg>
  );
}

function SelectionIcons() {
  return (
    <svg width="228" height="26" viewBox="1425 396 228 26" className="block">
      <g fill="#47c3c3" stroke="#333" strokeWidth=".9"><circle cx="1463.500" cy="409.500" r="2.600" /><circle cx="1477" cy="402" r="2.600" /><circle cx="1474" cy="416" r="2.600" /><rect x="1552.500" y="401.500" width="15" height="15" /><path d="M1590 400l9.500 5v9.500l-9.500 4.500-9.500-4.500V405z" /></g>
      <path d="M1580.500 405l9.500 4.500 9.500-4.500M1590 409.500v9.500" stroke="#333" fill="none" />
      <g fill="none" strokeLinejoin="round"><path d="M1508 401.500l-3.500 16-12-7z" stroke="#333" strokeWidth="3.400" /><path d="M1508 401.500l-3.500 16-12-7z" stroke="#47c3c3" strokeWidth="1.500" />
        <path d="M1523.500 401c16-1.500 17 16 0 16.500v-4c5-2 5-6 0-8z" stroke="#333" strokeWidth="3.400" /><path d="M1523.500 401c16-1.500 17 16 0 16.500v-4c5-2 5-6 0-8z" stroke="#47c3c3" strokeWidth="1.500" /></g>
    </svg>
  );
}

function ColumnOne() {
  return (
    <div className="flex w-[248px] flex-col border-l border-[#3a3a3a] pl-[4px]">
      <div className="mt-[9px] flex h-[24px] items-center">
        <div className={"flex h-[23px] w-[212px] items-center border border-[#404040] bg-[#656565] pl-[3px] text-[#dcdcdc] " + ui}>Box001</div>
        <div className="ml-[6px] h-6 w-[22px] border border-black bg-[#d65a5a]" />
      </div>
      <div className={"mt-[11px] flex h-[24px] w-[242px] items-center justify-between border border-[#404040] bg-[#656565] pl-[3px] pr-[8px] text-[#dcdcdc] " + uiBase}>
        Modifier List<svg width="9" height="7"><path d="M0 0h9L4.500 6.500z" fill="#e0e0e0" /></svg>
      </div>
      <div className="mt-[4px] flex h-[128px] w-[242px] border-2 border-[#e8e8f0] bg-[#444]">
        <div className={"flex-1 text-white " + ui}>
          <div className="flex h-[21px]">
            <div className="flex w-[24px] items-center justify-center"><svg width="9" height="7"><path d="M0 0h9L4.500 6.500z" fill="#e0e0e0" /></svg></div>
            <div className="flex-1 bg-[#5f8ac2] pl-[2px] leading-[22px]">Editable Poly</div>
          </div>
          {["Vertex", "Edge", "Border", "Polygon", "Element"].map((t, i) => (
            <div key={t} className="flex h-[21px]">
              <svg width="36" height="21" shapeRendering="crispEdges"><path d={`M12.500 0v${i === 4 ? 11 : 21}M13 10.500h18`} stroke="#0c0c0c" strokeDasharray="1 1" fill="none" /></svg>
              <span className="leading-[22px]">{t}</span>
            </div>
          ))}
        </div>
        <div className="flex w-5 flex-col bg-[#f0f0f0]">
          <svg width="20" height="21"><path d="M5.500 13l4.500-4.500 4.500 4.500" fill="none" stroke="#505050" strokeWidth="2" /></svg>
          <div className="h-[68px] bg-[#cdcdcd]" />
          <svg width="20" height="34"><path d="M5.500 22l4.500 4.500 4.500-4.500" fill="none" stroke="#505050" strokeWidth="2" /></svg>
        </div>
      </div>
      <div className="mt-[4px]"><StackTools /></div>
      <div className="mt-[7px] flex h-[439px]">
        <div className="flex w-[231px] flex-col gap-[3px]">
          <div className={roll + " h-[294px]"}>
            <RollHead t="Selection" open h="h-[24px]" />
            <div className="mt-[4px]"><SelectionIcons /></div>
            <div className="flex flex-col pl-[18px] pt-[6px]">
              <Chk off t="By Vertex" className="h-6" />
              <Chk off t="Ignore Backfacing" className="h-6" />
              <div className="flex h-6 items-center"><Chk off t="By Angle:" className="w-[88px]" /><Field off t="45,0" className="w-[107px]" /></div>
            </div>
            <div className="mt-[2px] flex pl-4"><Btn off t="Shrink" className="h-[21px] w-24" /><Btn off t="Grow" className="ml-2 h-[21px] w-24" /></div>
            <div className="mt-[5px] flex pl-4">
              <Btn off t="Ring" className="h-[21px] w-[76px]" />
              <div className="ml-1 flex h-5 w-[15px] items-center justify-center border border-[#4a4a4a] bg-[#565656]"><SpinArrows off /></div>
              <Btn off t="Loop" className="ml-[9px] h-[21px] w-[78px]" />
              <div className="ml-[2px] flex h-5 w-[15px] items-center justify-center border border-[#4a4a4a] bg-[#565656]"><SpinArrows off /></div>
            </div>
            <Group t="Preview Selection" className="ml-[6px] mt-[7px] h-[49px] w-[212px]">
              <div className="flex pl-px pt-[5px]"><Radio on t="Off" className="w-[66px]" /><Radio off t="SubObj" className="w-[82px]" /><Radio off t="Multi" /></div>
            </Group>
            <div className={"mt-[7px] pl-[78px] text-white " + ui}>Whole Object Selected</div>
          </div>
          <div className={roll + " h-6"}><RollHead t="Soft Selection" /></div>
          <div className={roll + " h-6"}><RollHead t="Subdivision Displacement" /></div>
          <div className={roll + " h-6"}><RollHead t="Paint Deformation" /></div>
        </div>
        <div className="ml-[3px] w-[8px] rounded-t-[4px] bg-[#3c3c3c]" />
      </div>
    </div>
  );
}

const winIcon = <svg width="10" height="10"><rect x=".75" y=".75" width="8.500" height="8.500" fill="none" stroke="#000" strokeWidth="1.300" /><rect x="0" y="0" width="10" height="3" fill="#000" /></svg>;

function SpinRow({ label, v, off, h }: { label: string; v: string; off?: boolean; h: string }) {
  return (
    <div className={"flex items-center pl-[7px] " + h}>
      {off ? <Chk className="w-[14px]" /> : <div className="w-[14px]" />}
      <span className={"w-[92px] text-right text-white " + ui}>{label}</span>
      <Field off={off} t={v} className="ml-[4px] w-[77px]" />
    </div>
  );
}

function ColumnTwo() {
  return (
    <div className="flex h-[702px] w-[245px] border-r border-t border-b border-[#363636] pt-[4px]">
      <div className="flex h-[696px] w-[230px] flex-col gap-[4px] overflow-hidden">
        <div className={roll + " h-[473px] shrink-0"}>
          <RollHead t="Subdivision Surface" open h="h-[20px]" />
          <div className="flex flex-col pl-[19px] pt-[7px]">
            <Chk on t="Smooth Result" className="h-[26px]" />
            <Chk t="Use NURMS Subdivision" className="h-[25px]" />
            <Chk on t="Isoline Display" className="h-[23px]" />
            <div className="flex h-[24px] items-center"><Chk on t="Show Cage......" className="w-[133px]" /><div className="h-[18px] w-5 border border-black bg-[#ffc800]" /><div className="ml-[10px] h-[18px] w-5 border border-black bg-[#e3e38c]" /></div>
          </div>
          <Group t="Display" className="ml-[11px] mt-px h-[67px] w-[203px]">
            <SpinRow label="Iterations:" v="1" h="-mt-px h-[20px]" /><SpinRow label="Smoothness:" v="1,0" h="h-[31px]" />
          </Group>
          <Group t="Render" className="ml-[11px] mt-px h-[69px] w-[203px]">
            <SpinRow off label="Iterations:" v="0" h="h-[20px]" /><SpinRow off label="Smoothness:" v="1,0" h="h-[31px]" />
          </Group>
          <Group t="Separate By" className="ml-[11px] mt-px h-[67px] w-[203px]">
            <Chk t="Smoothing Groups" className="ml-[7px] mt-[3px] h-[22px]" /><Chk t="Materials" className="ml-[7px] h-[22px]" />
          </Group>
          <Group t="Update Options" className="ml-[11px] mt-px h-[117px] w-[203px]">
            <Radio on t="Always" className="ml-[7px] h-[20px]" /><Radio t="When Rendering" className="ml-[7px] h-5" /><Radio t="Manually" className="ml-[7px] h-5" />
            <Btn t="Update" className="ml-[35px] mt-[6px] h-[23px] w-[128px]" />
          </Group>
        </div>
        <div className={roll + " h-[240px] shrink-0"}>
          <RollHead t="Edit Geometry" open h="h-[20px]" />
          <Btn t="Repeat Last" className="ml-[13px] mt-[8px] h-[22px] w-[198px]" />
          <Group t="Constraints" className="ml-[11px] h-[69px] w-[203px]">
            <div className="flex pl-[11px] pt-[3px]"><Radio on t="None" className="h-[22px] w-20" /><Radio t="Edge" /></div>
            <div className="flex pl-[11px]"><Radio t="Face" className="h-[22px] w-20" /><Radio t="Normal" /></div>
          </Group>
          <div className="mt-[8px] flex h-[22px] items-center pl-[27px]"><Chk t="Preserve UVs" className="w-[122px]" /><div className="flex h-[21px] w-5 items-center justify-center rounded-[4px] border border-[#4a4a4a] bg-[#656565]">{winIcon}</div></div>
          <div className="mt-[5px] flex pl-[13px]"><Btn t="Create" className="h-[22px] w-[96px]" /><Btn off t="Collapse" className="ml-[6px] h-[22px] w-[96px]" /></div>
          <div className="mt-[6px] flex pl-[13px]"><Btn t="Attach" className="h-[21px] w-[75px]" /><div className="ml-[2px] flex h-[21px] w-[19px] items-center justify-center rounded-[4px] border border-[#4a4a4a] bg-[#656565]">{winIcon}</div><Btn off t="Detach" className="ml-[6px] h-[21px] w-[96px]" /></div>
          <Group t="" className="ml-[11px] mt-[6px] h-[40px] w-[203px]"><Btn t="" className="ml-[6px] mt-[7px] h-5 w-[90px]" /></Group>
        </div>
      </div>
      <div className="ml-[3px] h-[696px] w-[9px] rounded-[4px] bg-[#3a3a3a]"><div className="h-[468px] rounded-[4px] border border-[#3a3a3a] bg-[#545454]" /></div>
    </div>
  );
}

/* ---------- time line ---------- */

function TimeBar() {
  const b = "flex h-[21px] items-center justify-center rounded-[4px] border border-[#4c4c4c] bg-[#656565] text-[#dcdcdc] " + ui;
  return (
    <div className="flex h-[42px] shrink-0 flex-col">
      <div className="flex h-[31px] gap-px pl-[3px] pt-[6px]">
        <div className={b + " w-5"}>&lt;</div>
        <div className={b + " w-[155px] pr-[2px]"}>0 / 100</div>
        <div className={b + " w-[19px]"}>&gt;</div>
      </div>
      <svg width="1912" height="11" viewBox="0 841 1912 11" shapeRendering="crispEdges" className="block">
        <rect x="65" y="843" width="1785" height="9" fill="#2b2b2b" />
        <rect x="3" y="842" width="1909" height="1" fill="#0c0c0c" />
        <rect x="68" y="844" width="9" height="8" fill="#8a8a20" />
        {Array.from({ length: 101 }, (_, i) => <rect key={i} x={Math.round(72 + i * 17.710)} y="843" width="1" height="9" fill={i ? "#707070" : "#b0b030"} />)}
      </svg>
    </div>
  );
}

export default function App() {
  return (
    <div className="relative flex h-[852px] w-[1912px] flex-col overflow-hidden bg-[#444]">
      <TopToolbar />
      <Ribbon />
      <div className="flex h-[755px] shrink-0">
        <div className="flex w-[381px] flex-col pt-[8px]">
          <div className="flex h-[9px] gap-[10px]"><Dots className="w-[115px]" /><Dots className="w-[249px]" /></div>
          <div className="flex"><LeftStrip /><div className="w-20" /><Explorer /></div>
        </div>
        <div className="grid grid-cols-[514px_515px] content-start gap-x-[4px] gap-y-[4px] pt-[6px]">
          <TopView />
          <FrontView />
          <LeftView />
          <PerspView />
        </div>
        <div className="ml-[5px] flex w-[493px] flex-col pt-[8px]">
          <Dots className="ml-[2px] h-[9px]" />
          <CmdTabs />
          <div className="flex"><ColumnOne /><ColumnTwo /></div>
        </div>
      </div>
      <TimeBar />
      <EditPanel />
      <AlignPanel />
    </div>
  );
}
